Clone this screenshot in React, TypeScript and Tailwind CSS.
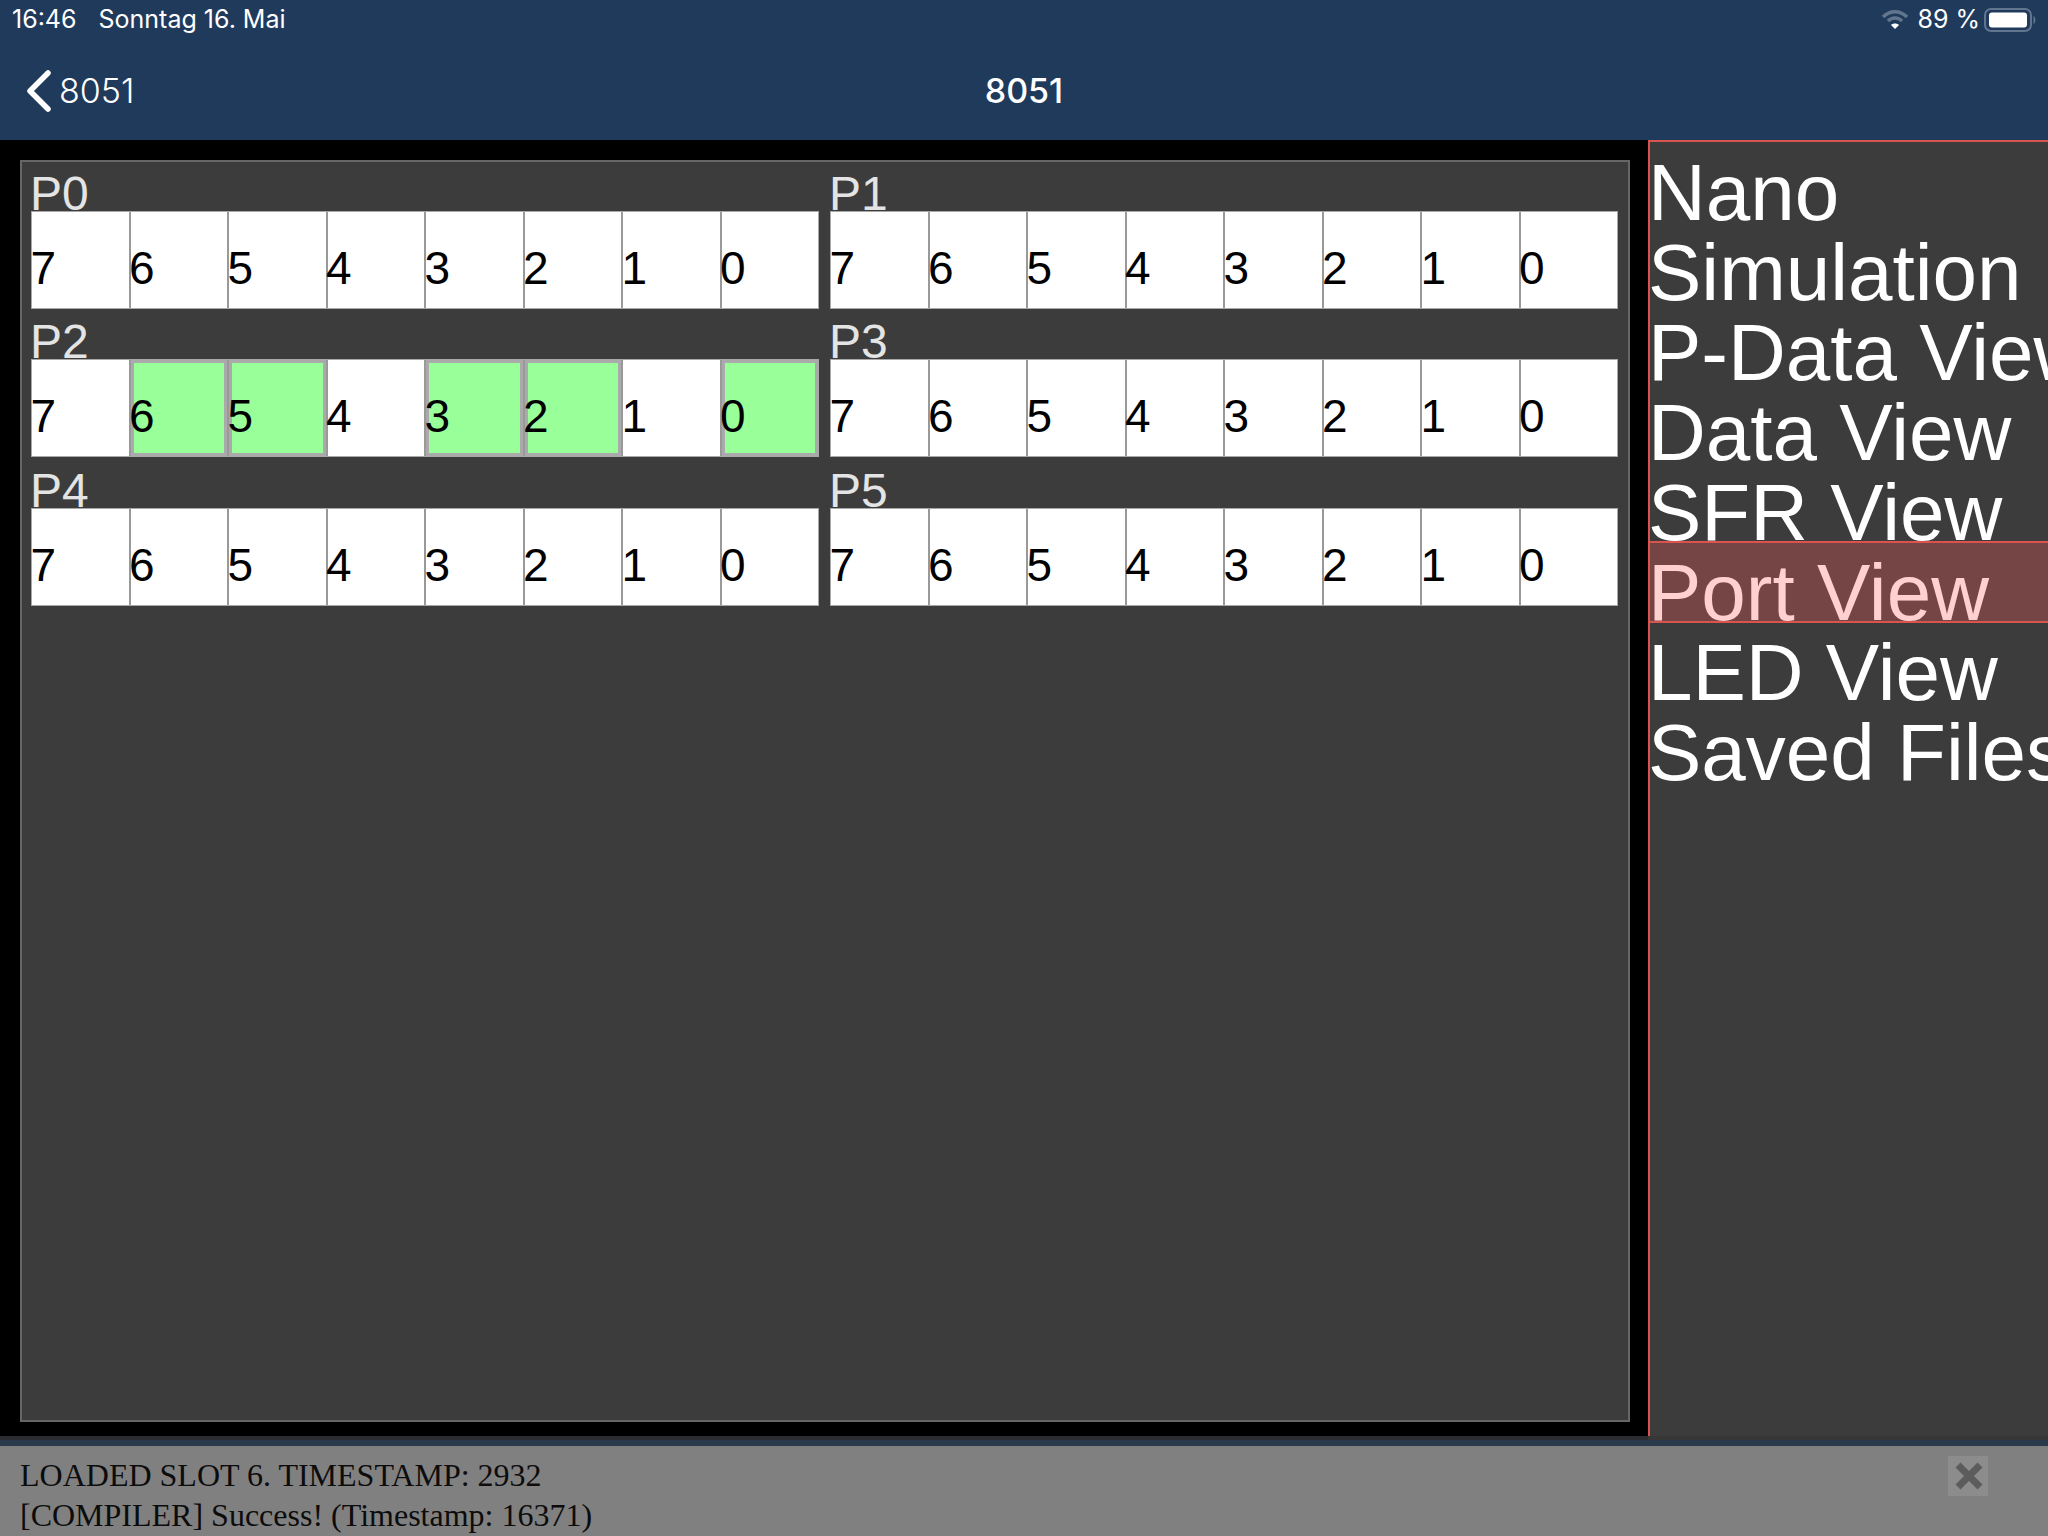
const BITS = [7, 6, 5, 4, 3, 2, 1, 0];

const PORTS = [
  { name: 'P0', on: [] as number[] },
  { name: 'P1', on: [] as number[] },
  { name: 'P2', on: [6, 5, 3, 2, 0] },
  { name: 'P3', on: [] as number[] },
  { name: 'P4', on: [] as number[] },
  { name: 'P5', on: [] as number[] },
];

const MENU = ['Nano', 'Simulation', 'P-Data View', 'Data View', 'SFR View', 'Port View', 'LED View', 'Saved Files'];

function Port({ name, on }: { name: string; on: number[] }) {
  return (
    <div>
      <div className="h-[48.5px] -ml-px flex items-end text-[48px] leading-[35px] text-[#e4e4e4]">{name}</div>
      <div className="flex h-[98px] border border-[#a8a8a8] bg-white">
        {BITS.map((bit) => (
          <div key={bit} className="relative flex-1 border-l-2 border-[#999999] first:border-l-0 text-[46px] leading-[113px] text-black">
            {on.includes(bit) && (
              <div className="absolute inset-0 border-[3px] border-[#aaaaaa] bg-[#99ff99]" />
            )}
            <span className="relative -ml-[1.5px]">{bit}</span>
          </div>
        ))}
      </div>
    </div>
  );
}

export default function App() {
  return (
    <div className="w-[2048px] h-[1536px] flex flex-col overflow-hidden bg-black font-['Liberation_Sans',sans-serif]">
      <header className="h-[140px] shrink-0 bg-[#203a5c] text-white font-['Inter',sans-serif]">
        <div className="h-[38px] pl-3 pr-[10px] pt-[2px] flex items-center justify-between text-[25px]">
          <div className="flex gap-[22px]">
            <span>16:46</span>
            <span>Sonntag 16. Mai</span>
          </div>
          <div className="flex items-center">
            <svg width="28" height="22" viewBox="0 0 28 22" className="mr-[8px]">
              <path d="M2 8 C9 1 19 1 26 8 M7 12 C11 8 17 8 21 12" fill="none" stroke="#62758f" strokeWidth="3.5" />
              <path d="M10 16 C12 14 16 14 18 16 L14 20 Z" fill="#ffffff" />
            </svg>
            <span className="mr-[4px]">89 %</span>
            <svg width="54" height="26" viewBox="0 0 54 26">
              <rect x="1" y="2" width="46" height="22" rx="6" fill="none" stroke="#62758f" strokeWidth="2" />
              <rect x="5" y="5.5" width="38" height="15" rx="3" fill="#ffffff" />
              <path d="M49.5 9 C52 10 52 16 49.5 17 Z" fill="#62758f" />
            </svg>
          </div>
        </div>
        <nav className="h-[102px] pt-[3px] grid grid-cols-3 items-center text-[34px]">
          <div className="flex items-center pl-[24px]">
            <svg width="28" height="44" viewBox="0 0 28 44" fill="none">
              <path d="M24 4 L6 22 L24 40" stroke="#ffffff" strokeWidth="5.5" strokeLinecap="round" strokeLinejoin="round" />
            </svg>
            <span className="ml-[7px] font-[350]">8051</span>
          </div>
          <div className="text-center font-medium">8051</div>
        </nav>
      </header>

      <main className="h-[1296px] shrink-0 flex">
        <div className="w-[1648px] shrink-0 pl-[20px] pr-[18px] pt-[20px] pb-[14px]">
          <div className="h-full border-2 border-[#666666] bg-[#3c3c3c] pl-[9px] pr-[10px]">
            <div className="grid grid-cols-2 gap-x-[11px] gap-y-[2px]">
              {PORTS.map((p) => (
                <Port key={p.name} name={p.name} on={p.on} />
              ))}
            </div>
          </div>
        </div>
        <aside className="flex-1 border-l-2 border-t-2 border-[#d9534f] bg-[#3c3c3c] text-[80px] overflow-hidden">
          <div className="-mt-px -indent-[2px]">
            {MENU.map((item) => (
              <div
                key={item}
                className={
                  item === 'Port View'
                    ? 'h-[82px] -mb-[2px] overflow-hidden whitespace-nowrap border-y-2 border-[#d9534f] bg-[#754444] text-[#ffd0d0] leading-[99px]'
                    : 'h-[80px] overflow-hidden whitespace-nowrap text-white leading-[103px]'
                }
              >
                {item}
              </div>
            ))}
          </div>
        </aside>
      </main>

      <div className="h-[4px] shrink-0 flex">
        <div className="w-[1648px] bg-[#2a2c31]" />
        <div className="flex-1 bg-[#373737]" />
      </div>
      <div className="h-[6px] shrink-0 bg-[#2a394b]" />

      <footer className="flex-1 bg-[#808080] pl-[20px] pr-[60px] pt-[9px] flex justify-between font-['Liberation_Serif',serif] text-[32px] leading-[40px] text-[#0c0c0c]">
        <div>
          <div>LOADED SLOT 6. TIMESTAMP: 2932</div>
          <div>[COMPILER] Success! (Timestamp: 16371)</div>
        </div>
        <button className="mt-px w-[40px] h-[40px] bg-[#8c8c8c] flex items-center justify-center">
          <svg width="28" height="28" viewBox="0 0 28 28" className="translate-x-px">
            <path d="M3 3 L25 25 M25 3 L3 25" stroke="#5c5c5c" strokeWidth="7" />
          </svg>
        </button>
      </footer>
    </div>
  );
}
